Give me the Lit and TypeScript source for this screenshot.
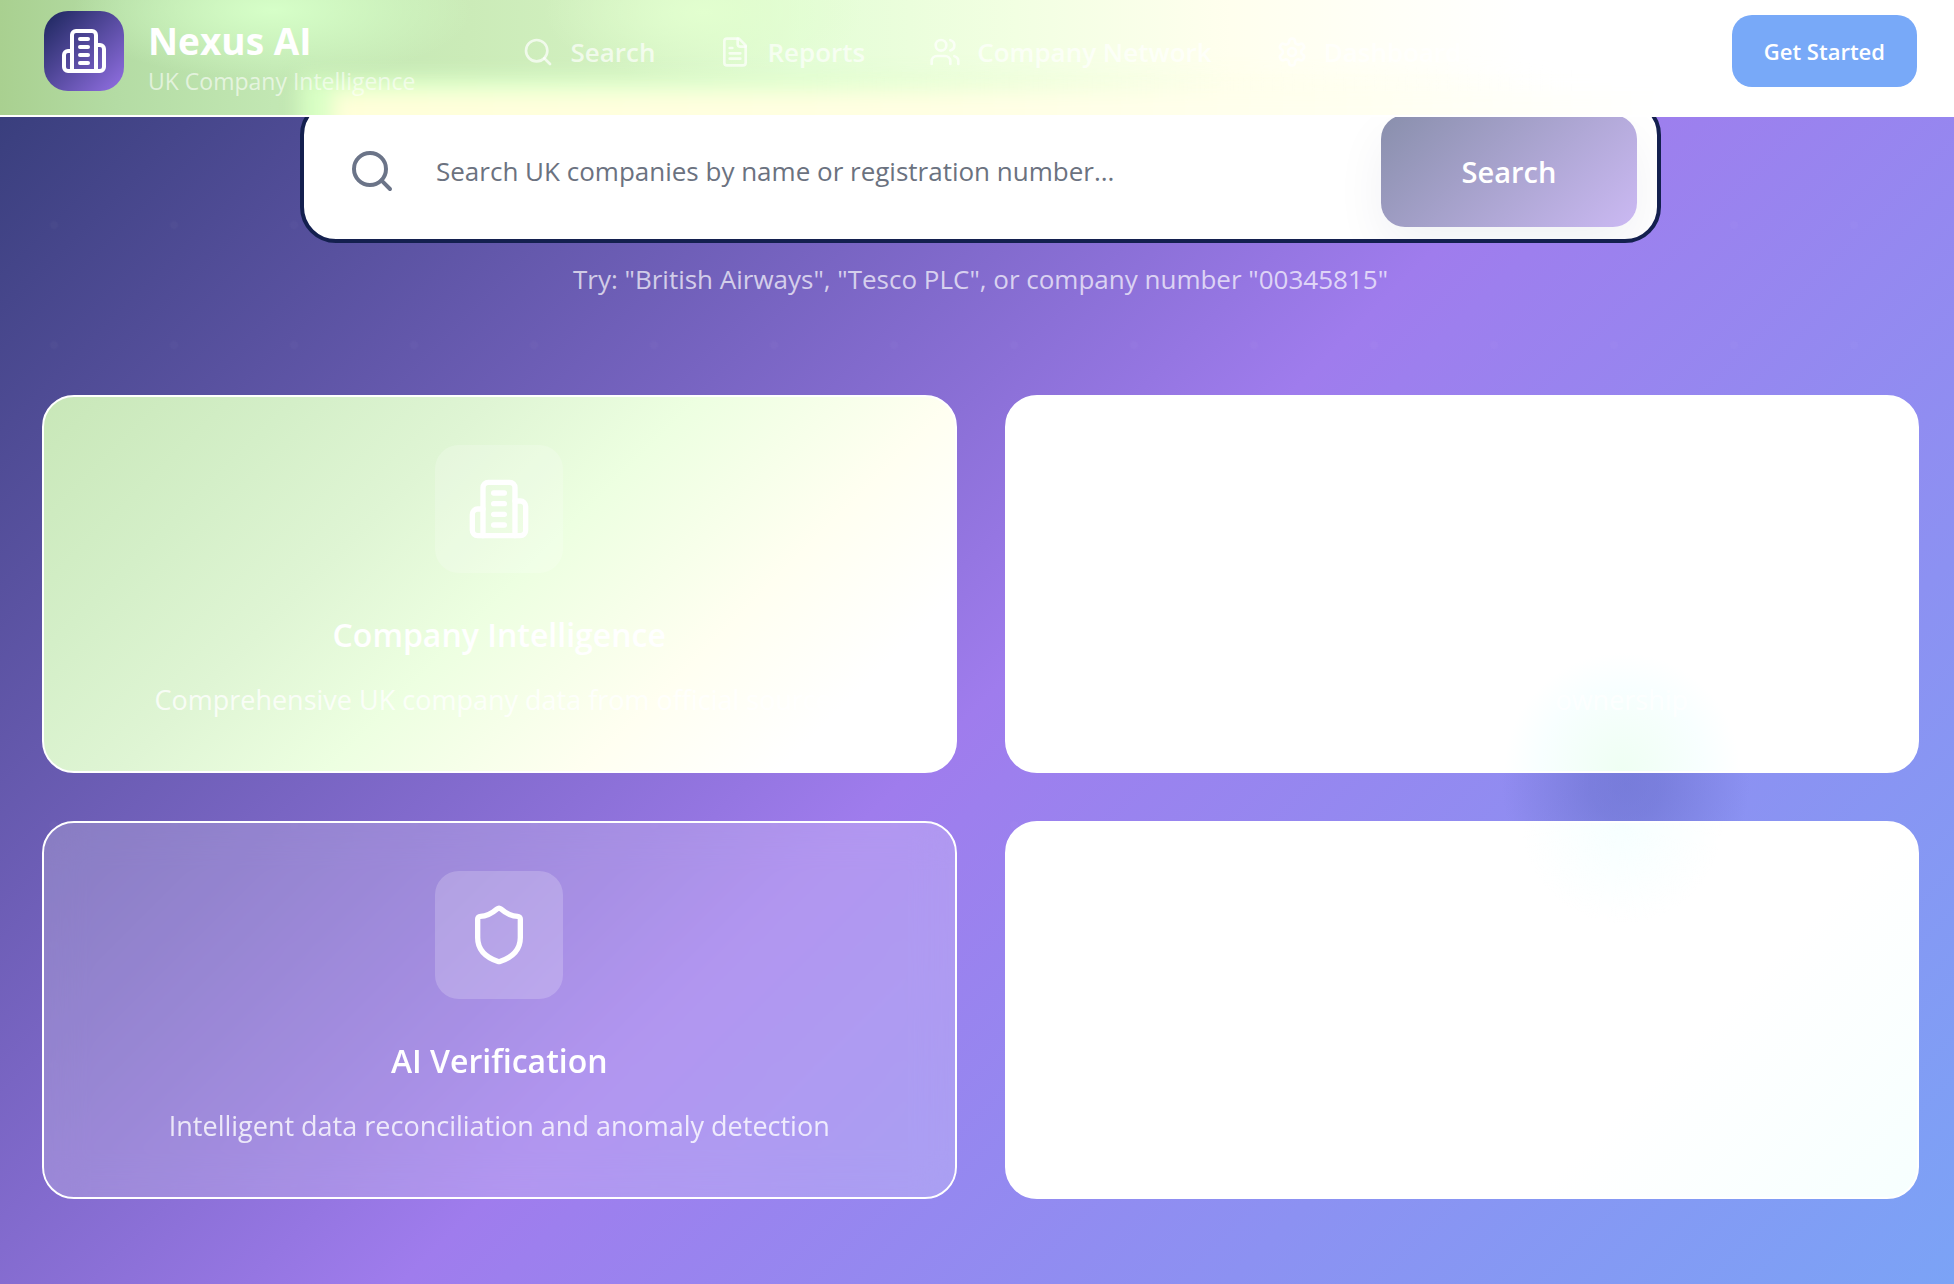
import { LitElement, html, css, svg } from "lit";
import { customElement } from "lit/decorators.js";

const glyphs = {
  building: svg`<path d="M6 22V4a2 2 0 0 1 2-2h8a2 2 0 0 1 2 2v18Z"/><path d="M6 12H4a2 2 0 0 0-2 2v6a2 2 0 0 0 2 2h2"/><path d="M18 9h2a2 2 0 0 1 2 2v9a2 2 0 0 1-2 2h-2"/><path d="M10 6h4M10 10h4M10 14h4M10 18h4"/>`,
  search: svg`<circle cx="11" cy="11" r="8"/><path d="m21 21-4.3-4.3"/>`,
  file: svg`<path d="M15 2H6a2 2 0 0 0-2 2v16a2 2 0 0 0 2 2h12a2 2 0 0 0 2-2V7Z"/><path d="M14 2v4a2 2 0 0 0 2 2h4"/><path d="M10 9H8M16 13H8M16 17H8"/>`,
  users: svg`<path d="M16 21v-2a4 4 0 0 0-4-4H6a4 4 0 0 0-4 4v2"/><circle cx="9" cy="7" r="4"/><path d="M22 21v-2a4 4 0 0 0-3-3.87"/><path d="M16 3.13a4 4 0 0 1 0 7.75"/>`,
  gear: svg`<path d="M12.22 2h-.44a2 2 0 0 0-2 2v.18a2 2 0 0 1-1 1.73l-.43.25a2 2 0 0 1-2 0l-.15-.08a2 2 0 0 0-2.73.73l-.22.38a2 2 0 0 0 .73 2.73l.15.1a2 2 0 0 1 1 1.72v.51a2 2 0 0 1-1 1.74l-.15.09a2 2 0 0 0-.73 2.73l.22.38a2 2 0 0 0 2.73.73l.15-.08a2 2 0 0 1 2 0l.43.25a2 2 0 0 1 1 1.73V20a2 2 0 0 0 2 2h.44a2 2 0 0 0 2-2v-.18a2 2 0 0 1 1-1.73l.43-.25a2 2 0 0 1 2 0l.15.08a2 2 0 0 0 2.73-.73l.22-.39a2 2 0 0 0-.73-2.73l-.15-.08a2 2 0 0 1-1-1.74v-.5a2 2 0 0 1 1-1.74l.15-.09a2 2 0 0 0 .73-2.73l-.22-.38a2 2 0 0 0-2.73-.73l-.15.08a2 2 0 0 1-2 0l-.43-.25a2 2 0 0 1-1-1.73V4a2 2 0 0 0-2-2z"/><circle cx="12" cy="12" r="3"/>`,
  shield: svg`<path d="M20 13c0 5-3.5 7.5-7.66 8.95a1 1 0 0 1-.67-.01C7.5 20.5 4 18 4 13V6a1 1 0 0 1 1-1c2 0 4.5-1.2 6.24-2.72a1.17 1.17 0 0 1 1.52 0C14.51 3.81 17 5 19 5a1 1 0 0 1 1 1z"/>`,
};

const icon = (name: keyof typeof glyphs, size: string) => html`<svg
  class="icon ${size}" viewBox="0 0 24 24" aria-hidden="true">${glyphs[name]}</svg>`;

@customElement("app-root")
export class AppRoot extends LitElement {
  static styles = css`
    :host {
      display: block;
      font-family: "Segoe UI", "Open Sans", "Noto Sans", sans-serif;
      color: #fff;
    }
    * { box-sizing: border-box; }
    .page {
      min-height: 100vh;
      display: flex;
      flex-direction: column;
      background:
        radial-gradient(circle at 83.2% 784px, rgba(88, 98, 186, 0.42), rgba(88, 98, 186, 0.36) 36px, rgba(88, 98, 186, 0) 124px),
        radial-gradient(circle, rgba(255, 255, 255, 0.02) 3px, transparent 5px) -6px 45px / 120px 120px,
        linear-gradient(135deg, #323a75, #9f7ced 52%, #9d7fee 55%, #7ba3f6);
    }
    .icon {
      display: block;
      flex: none;
      fill: none;
      stroke: currentColor;
      stroke-width: 2;
      stroke-linecap: round;
      stroke-linejoin: round;
    }
    .s32 { width: 32px; height: 32px; }
    .s48 { width: 48px; height: 48px; }
    .s64 { width: 64px; height: 64px; }

    .top {
      position: relative;
      z-index: 1;
      display: flex;
      align-items: flex-start;
      padding: 11px 37px 16px 44px;
      border-bottom: 2px solid #fff;
      overflow: hidden;
      background:
        radial-gradient(ellipse 200px 70px at 14% 10px, #d6ffc8, rgba(214, 255, 200, 0)),
        radial-gradient(ellipse 160px 70px at 36% 12px, #e2ffcf, rgba(226, 255, 207, 0)),
        linear-gradient(90deg, #a9d090, #b4dca4 6%, #c2e7b3 14%, #cbebb8 24%, #d3f1c1 32%, #e4fdd6 41%, #f2ffe2 52%, #ffffee 63%, #fff 78%);
    }
    .top::before,
    .top::after {
      content: "";
      position: absolute;
      z-index: -1;
      right: -40px;
      bottom: -40px;
    }
    .top::before {
      left: 300px;
      height: 78px;
      background: linear-gradient(90deg, #d8ffc4, #e0ffce 30%, rgba(255, 255, 232, 0.6) 55%, rgba(255, 255, 255, 0) 75%);
      filter: blur(10px);
    }
    .top::after {
      left: 332px;
      height: 64px;
      background: linear-gradient(90deg, #ffffd9, #ffffe2 35%, #fffff0 62%, #fff 80%);
      filter: blur(10px);
    }
    .brand { display: flex; gap: 24px; align-items: flex-start; }
    .words { padding-top: 8px; }
    .logo {
      display: grid;
      place-items: center;
      width: 80px;
      height: 80px;
      border-radius: 24px;
      background: linear-gradient(135deg, #1b265c, #9370e4);
    }
    .name { font-size: 37px; line-height: 44px; font-weight: 700; }
    .tag { font-size: 23px; line-height: 36px; color: rgba(255, 255, 255, 0.6); }
    .nav { display: flex; align-items: center; gap: 64px; min-height: 82px; margin-left: 107px; }
    .link {
      display: flex;
      align-items: center;
      gap: 16px;
      color: rgba(255, 255, 255, 0.7);
      text-decoration: none;
      font-size: 26px;
      line-height: 40px;
      font-weight: 600;
    }
    .start {
      margin: 4px 0 0 auto;
      height: 72px;
      padding: 0 32px;
      border: 0;
      border-radius: 20px;
      background: #78a9f8;
      color: #fff;
      font: inherit;
      font-size: 22px;
      font-weight: 600;
    }

    .main { margin-top: -18px; padding: 0 35px 86px 42px; }
    .finder {
      display: flex;
      align-items: center;
      width: 73%;
      max-width: 1361px;
      margin: 0 auto;
      padding: 12px 20px 12px 44px;
      border: 4px solid #14204f;
      border-radius: 36px;
      background: #fff;
      color: #6b7488;
      overflow: hidden;
    }
    .query {
      flex: 1;
      min-width: 0;
      height: 112px;
      padding: 0 40px;
      border: 0;
      outline: 0;
      background: transparent;
      font: inherit;
      font-size: 26px;
      color: #6b7280;
    }
    .query::placeholder { color: #6b7280; opacity: 1; }
    .go {
      width: 256px;
      height: 112px;
      border: 0;
      border-radius: 24px;
      background: linear-gradient(135deg, #898fac, #cbb9f3);
      box-shadow: 0 20px 50px rgba(20, 32, 79, 0.06);
      color: #fff;
      font: inherit;
      font-size: 29px;
      font-weight: 600;
    }
    .hint {
      margin: 16px 0 0;
      text-align: center;
      font-size: 26px;
      line-height: 40px;
      color: rgba(255, 255, 255, 0.7);
    }
    .cards {
      display: grid;
      grid-template-columns: 1fr 1fr;
      gap: 48px;
      margin-top: 96px;
    }
    .card {
      display: flex;
      flex-direction: column;
      align-items: center;
      min-height: 378px;
      padding: 48px;
      border: 2px solid #fff;
      border-radius: 32px;
      text-align: center;
    }
    .mint {
      background: linear-gradient(135deg, #c8e7b8, #d4efc8 20%, #dff5d4 35%, #edffe1 51%, #fffff1 71%, #fff 86%) border-box;
    }
    .glass {
      background: rgba(255, 255, 255, 0.2);
      background-clip: padding-box;
      backdrop-filter: blur(20px);
    }
    .clear {
      justify-content: flex-end;
      background: radial-gradient(circle 118px at 67.6% 100%, #effff3, #f8ffff 70%, #fff) #fff;
    }
    .pale {
      background:
        radial-gradient(circle 100px at 67.6% 0, #f6ffff, rgba(255, 255, 255, 0)),
        linear-gradient(135deg, #fff 70%, #f6fffe);
    }
    .tile {
      display: grid;
      place-items: center;
      width: 128px;
      height: 128px;
      border-radius: 24px;
      background: rgba(255, 255, 255, 0.2);
    }
    .title { margin: 40px 0 0; font-size: 32px; line-height: 44px; font-weight: 600; }
    .text { margin: 20px 0 0; font-size: 27px; line-height: 46px; color: rgba(255, 255, 255, 0.8); }
    .faint { padding-left: 320px; }
  `;

  render() {
    return html`<div class="page">
      <header class="top">
        <div class="brand">
          <div class="logo">${icon("building", "s48")}</div>
          <div class="words">
            <div class="name">Nexus AI</div>
            <div class="tag">UK Company Intelligence</div>
          </div>
        </div>
        <nav class="nav">
          <a class="link" href="#search">${icon("search", "s32")}Search</a>
          <a class="link" href="#reports">${icon("file", "s32")}Reports</a>
          <a class="link" href="#network">${icon("users", "s32")}Company Network</a>
          <a class="link" href="#dashboard">${icon("gear", "s32")}Dashboard</a>
        </nav>
        <button class="start" type="button">Get Started</button>
      </header>
      <main class="main">
        <form class="finder">
          ${icon("search", "s48")}
          <input class="query" type="text" aria-label="Search UK companies"
            placeholder="Search UK companies by name or registration number..." />
          <button class="go" type="button">Search</button>
        </form>
        <p class="hint">Try: "British Airways", "Tesco PLC", or company number "00345815"</p>
        <section class="cards">
          <article class="card mint">
            <div class="tile">${icon("building", "s64")}</div>
            <h3 class="title">Company Intelligence</h3>
            <p class="text">Comprehensive UK company data from official sources</p>
          </article>
          <article class="card clear">
            <p class="text faint">ownership</p>
          </article>
          <article class="card glass">
            <div class="tile">${icon("shield", "s64")}</div>
            <h3 class="title">AI Verification</h3>
            <p class="text">Intelligent data reconciliation and anomaly detection</p>
          </article>
          <article class="card pale"></article>
        </section>
      </main>
    </div>`;
  }
}
